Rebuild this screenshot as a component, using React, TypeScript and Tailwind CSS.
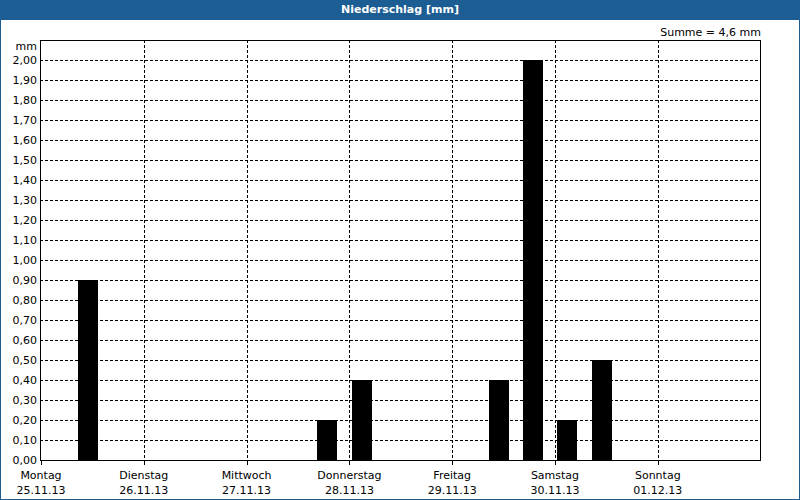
import React from "react";

const bars = [
  { x: 78, v: 0.9 },
  { x: 317, v: 0.2 },
  { x: 352, v: 0.4 },
  { x: 489, v: 0.4 },
  { x: 523, v: 2.0 },
  { x: 557, v: 0.2 },
  { x: 592, v: 0.5 },
];
const days = [
  ["Montag", "25.11.13"],
  ["Dienstag", "26.11.13"],
  ["Mittwoch", "27.11.13"],
  ["Donnerstag", "28.11.13"],
  ["Freitag", "29.11.13"],
  ["Samstag", "30.11.13"],
  ["Sonntag", "01.12.13"],
];
const dayX = (i: number) => 41 + i * 102.8;

export default function App() {
  const yv = (v: number) => 460 - v * 200;
  return (
    <div className="w-[800px] h-[500px] bg-white border border-[#1c5d93] flex flex-col" style={{ fontFamily: '"DejaVu Sans", sans-serif' }}>
      <div className="h-[19px] bg-[#1c5d93] text-white text-[11px] font-bold flex items-center justify-center shrink-0">
        Niederschlag [mm]
      </div>
      <div className="relative flex-1">
        <svg width="798" height="479" viewBox="1 20 798 479" className="block" fontFamily='"DejaVu Sans", sans-serif' fontSize="11">
          <text x="761" y="36" textAnchor="end" fill="#000">Summe = 4,6 mm</text>
          <text x="37" y="50" textAnchor="end" fill="#000">mm</text>
          {Array.from({ length: 21 }, (_, i) => i).map((i) => (
            <g key={i}>
              {i > 0 && <line x1="40" x2="760" y1={460 - i * 20 + 0.5} y2={460 - i * 20 + 0.5} stroke="#000" strokeDasharray="3 2" />}
              <text x="37" y={464 - i * 20} textAnchor="end" fill="#000">{(i / 10).toFixed(2).replace(".", ",")}</text>
            </g>
          ))}
          {[1, 2, 3, 4, 5, 6].map((i) => (
            <line key={i} x1={Math.round(dayX(i)) + 0.5} x2={Math.round(dayX(i)) + 0.5} y1="40" y2="460" stroke="#000" strokeDasharray="3 2" />
          ))}
          {bars.map((b, i) => (
            <rect key={i} x={b.x} y={yv(b.v)} width="20" height={460 - yv(b.v)} fill="#000" />
          ))}
          <rect x="40.5" y="40.5" width="720" height="420" fill="none" stroke="#000" />
          {days.map((d, i) => (
            <g key={i}>
              <line x1={Math.round(dayX(i)) + 0.5} x2={Math.round(dayX(i)) + 0.5} y1="460" y2="465" stroke="#000" />
              <text x={dayX(i)} y="479" textAnchor="middle" fill="#000">{d[0]}</text>
              <text x={dayX(i)} y="494" textAnchor="middle" fill="#000">{d[1]}</text>
            </g>
          ))}
        </svg>
      </div>
    </div>
  );
}
